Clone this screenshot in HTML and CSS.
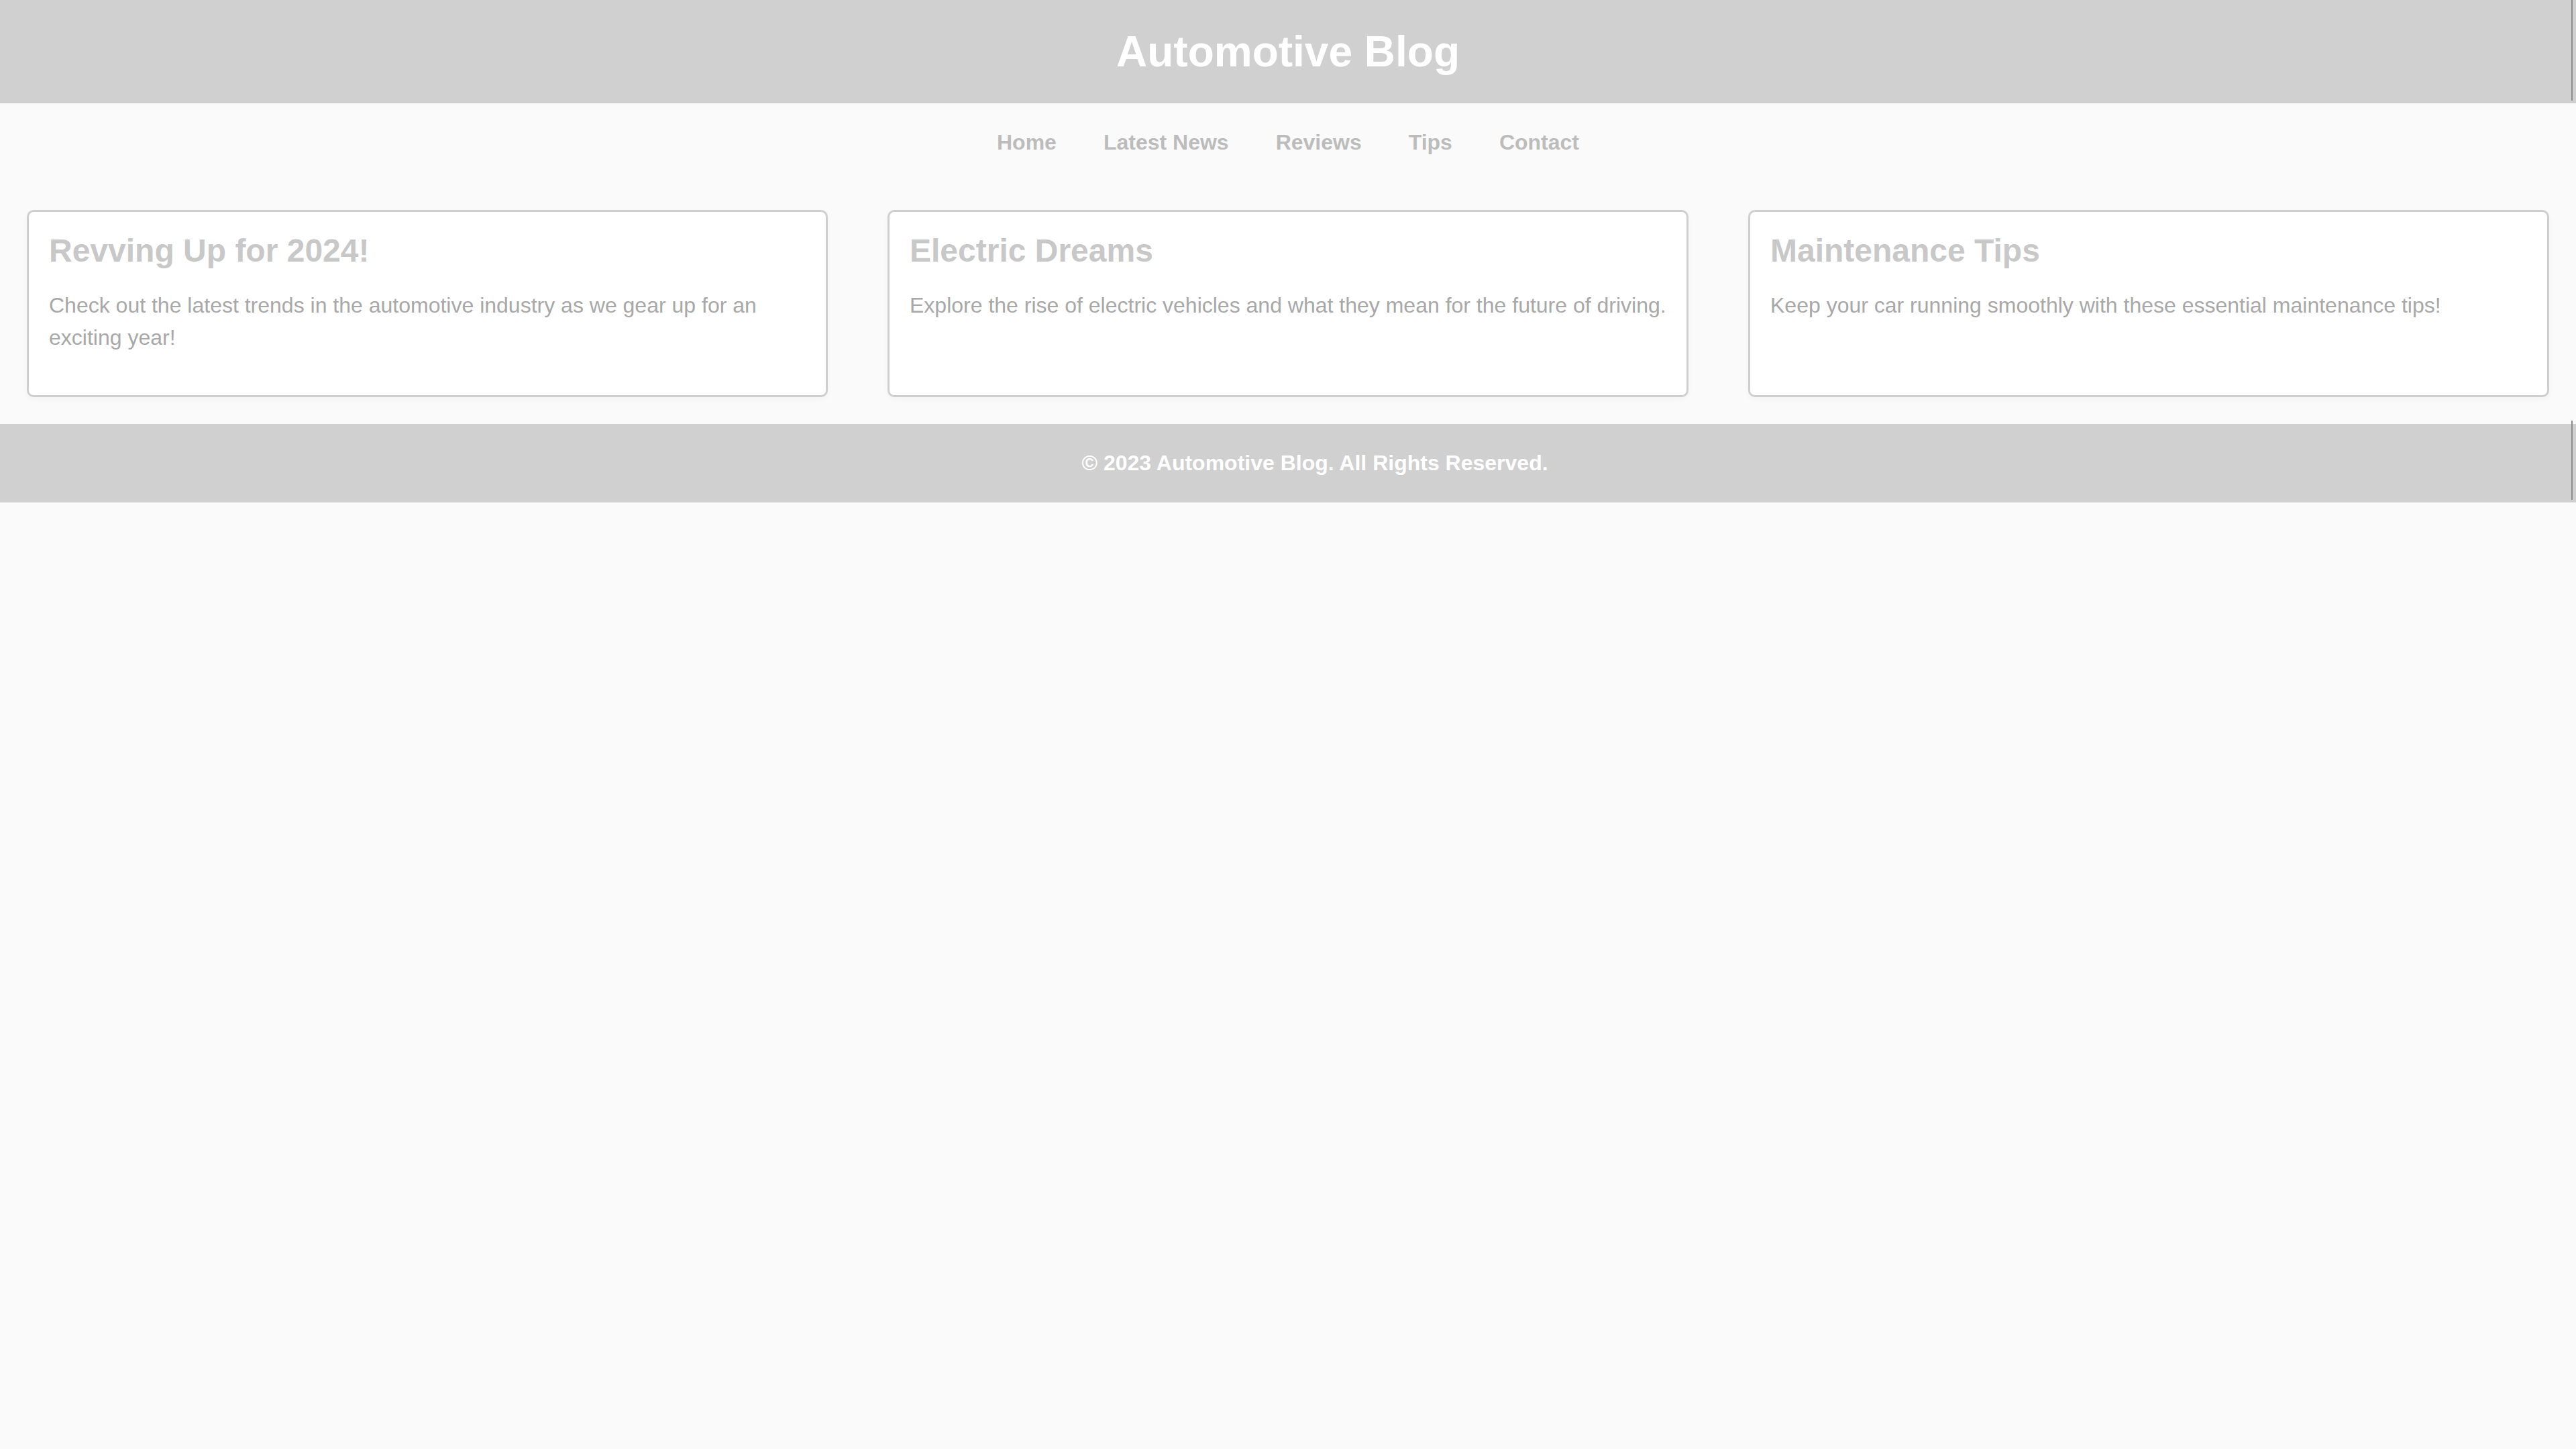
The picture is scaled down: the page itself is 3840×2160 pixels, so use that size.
FILE: index.html
```html
<!DOCTYPE html>
<html lang="en">
<head>
<meta charset="utf-8">
<title>Automotive Blog</title>
<link rel="stylesheet" href="styles.css">
</head>
<body>
<header class="site-header">
  <h1 class="site-title">Automotive Blog</h1>
</header>
<nav class="site-nav">
  <a href="#" class="nav-link">Home</a>
  <a href="#" class="nav-link">Latest News</a>
  <a href="#" class="nav-link">Reviews</a>
  <a href="#" class="nav-link">Tips</a>
  <a href="#" class="nav-link">Contact</a>
</nav>
<main class="posts">
  <article class="post-card">
    <h2 class="post-title">Revving Up for 2024!</h2>
    <p class="post-text">Check out the latest trends in the automotive industry as we gear up for an exciting year!</p>
  </article>
  <article class="post-card">
    <h2 class="post-title">Electric Dreams</h2>
    <p class="post-text">Explore the rise of electric vehicles and what they mean for the future of driving.</p>
  </article>
  <article class="post-card">
    <h2 class="post-title">Maintenance Tips</h2>
    <p class="post-text">Keep your car running smoothly with these essential maintenance tips!</p>
  </article>
</main>
<footer class="site-footer">
  <p class="footer-text">&copy; 2023 Automotive Blog. All Rights Reserved.</p>
</footer>
</body>
</html>
```
FILE: styles.css
```css
html, body {
  margin: 0;
  padding: 0;
}
body {
  background: #fafafa;
  font-family: "Liberation Sans", Arial, sans-serif;
  font-size: 32px;
  color: #aaaaaa;
}
.site-header {
  position: relative;
  background: #d0d0d0;
  padding: 40px;
  text-align: center;
}
.site-header::after {
  content: "";
  position: absolute;
  top: 0;
  bottom: 4px;
  right: 5px;
  width: 2px;
  background: #8c8c8c;
}
.site-title {
  margin: 0;
  font-size: 64px;
  font-weight: bold;
  color: #ffffff;
}
.site-nav {
  display: flex;
  justify-content: center;
  gap: 70px;
  padding: 40px 40px 42px;
}
.nav-link {
  color: #bcbcbc;
  font-weight: bold;
  text-decoration: none;
  font-size: 32px;
}
.posts {
  display: flex;
  justify-content: space-between;
  align-items: stretch;
  padding: 40px;
}
.post-card {
  width: 30%;
  background: #ffffff;
  border: 3px solid #cfcfcf;
  border-radius: 10px;
  padding: 30px;
  box-shadow: 0 4px 10px rgba(0, 0, 0, 0.03);
}
.post-title {
  margin: 0 0 30px;
  font-size: 48px;
  font-weight: bold;
  color: #c8c8c8;
}
.post-text {
  margin: 0 0 32px;
  font-size: 32px;
  line-height: 48px;
  color: #a8a8a8;
}
.site-footer {
  position: relative;
  background: #d0d0d0;
  padding: 40px 0 40px 80px;
  text-align: center;
}
.site-footer::after {
  content: "";
  position: absolute;
  top: -5px;
  bottom: 4px;
  right: 5px;
  width: 2px;
  background: #8c8c8c;
}
.footer-text {
  margin: 0;
  color: #ffffff;
  font-weight: bold;
  font-size: 32px;
}
```
